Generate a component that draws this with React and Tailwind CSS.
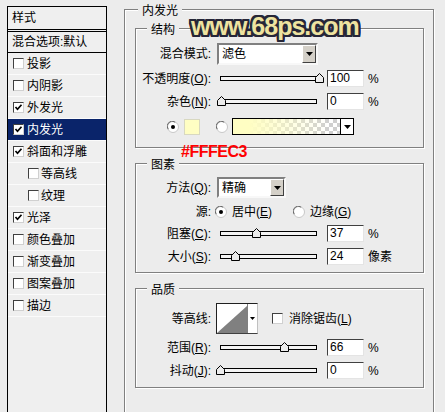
import React from 'react';

const FONT = "font-['Liberation_Sans','Noto_Sans_CJK_SC',sans-serif]";

function Check({ checked, className = '' }) {
  return (
    <div className={`w-[11px] h-[11px] flex-none bg-white border border-t-[#404040] border-l-[#404040] border-b-[#d0d0d0] border-r-[#d0d0d0] flex items-center justify-center ${className}`}>
      {checked && (
        <svg width="9" height="9" viewBox="0 0 9 9">
          <path d="M1.5 4 L3.5 6.3 L7.5 1.8" fill="none" stroke="#000" strokeWidth="1.7" />
        </svg>
      )}
    </div>
  );
}

function Radio({ on, className = '' }) {
  return (
    <svg width="12" height="12" viewBox="0 0 12 12" className={`flex-none ${className}`}>
      <circle cx="6" cy="6" r="5.5" fill="#fff" stroke="#c8c8c8" />
      <path d="M1.2 8.2 A5 5 0 0 1 8.2 1.2" fill="none" stroke="#606060" />
      {on && <circle cx="6" cy="6" r="2" fill="#000" />}
    </svg>
  );
}

function Slider({ pos }) {
  return (
    <div className="relative flex-none w-[104px] h-[17px] ml-[4px] flex items-center">
      <div className="ml-[5px] w-[97px] h-[5px] border border-black bg-[#f4f4f4]" />
      <svg
        className="absolute top-[3px]"
        style={{ left: pos - 219 }}
        width="9"
        height="10"
        viewBox="0 0 9 10"
      >
        <path d="M0.5 9.5V4.5L4.5 0.5L8.5 4.5V9.5Z" fill="#ececec" stroke="#000" />
      </svg>
    </div>
  );
}

function NumInput({ v }) {
  return (
    <div className="flex-none ml-[8px] w-[37px] h-[17px] bg-white border border-t-[#404040] border-l-[#404040] border-b-[#e4e4e4] border-r-[#e4e4e4] pl-[2px] leading-[15px]">
      {v}
    </div>
  );
}

function Arrow() {
  return (
    <svg width="7" height="4" viewBox="0 0 7 4">
      <path d="M0 0H7L3.5 4Z" fill="#000" />
    </svg>
  );
}

function Select({ text, className }) {
  return (
    <div className={`flex-none flex items-stretch bg-white border-2 border-t-[#808080] border-l-[#808080] border-b-[#f8f8f8] border-r-[#f8f8f8] ${className}`}>
      <span className="flex-1 pl-[3px] flex items-center">{text}</span>
      <div className="w-[14px] bg-[#d4d0c8] border border-t-white border-l-white border-b-[#404040] border-r-[#404040] flex items-center justify-center">
        <Arrow />
      </div>
    </div>
  );
}

function Group({ label, labelClass, className, children }) {
  return (
    <div className={`relative border border-[#808080] shadow-[inset_1px_1px_0_#fff,1px_1px_0_#fff] ${className}`}>
      <span className={`absolute bg-[#ececec] px-[4px] leading-[14px] ${labelClass}`}>{label}</span>
      {children}
    </div>
  );
}

function Label({ children }) {
  return <div className="w-[75px] flex-none text-right leading-[14px]">{children}</div>;
}

const items = [
  { t: '投影' },
  { t: '内阴影' },
  { t: '外发光', c: true },
  { t: '内发光', c: true, sel: true },
  { t: '斜面和浮雕', c: true },
  { t: '等高线', ind: true },
  { t: '纹理', ind: true },
  { t: '光泽', c: true },
  { t: '颜色叠加' },
  { t: '渐变叠加' },
  { t: '图案叠加' },
  { t: '描边' },
];

export default function App() {
  return (
    <div className={`relative w-[445px] h-[412px] overflow-hidden bg-[#ececec] flex items-start text-[12px] text-black ${FONT}`}>
      {/* Left style list */}
      <div className="flex-none ml-[7px] mt-[6px] w-[100px] h-[420px] border border-black bg-[#efefef] flex flex-col">
        <div className="h-[23px] border-b border-black pl-[4px] flex items-center leading-[14px]">样式</div>
        <div className="mt-[1px] border-t border-black h-[22px] border-b border-b-black pl-[4px] flex items-center leading-[14px]">
          混合选项:默认
        </div>
        {items.map((it) => (
          <div
            key={it.t}
            className={`h-[22px] border-b border-[#fbfbfb] flex items-center leading-[14px] ${it.ind ? 'pl-[20px]' : 'pl-[5px]'} ${it.sel ? 'bg-[#0a246a] text-white' : ''}`}
          >
            <Check checked={it.c} />
            <span className={it.ind ? 'ml-[2px]' : 'ml-[3px]'}>{it.t}</span>
          </div>
        ))}
      </div>

      {/* Right: 内发光 */}
      <Group
        label="内发光"
        labelClass="-top-[6px] left-[13px]"
        className="flex-none ml-[17px] mt-[9px] w-[310px] h-[420px] pl-[10px] pt-[18px]"
      >
        <Group label="结构" labelClass="-top-[6px] left-[11px]" className="w-[289px] h-[120px]">
          <div className="flex items-center mt-[14px] h-[22px]">
            <Label>混合模式:</Label>
            <Select text="滤色" className="ml-[6px] w-[101px] h-[22px]" />
          </div>
          <div className="flex items-center mt-[5px] h-[17px]">
            <Label>
              不透明度(<u>O</u>):
            </Label>
            <Slider pos={319} />
            <NumInput v="100" />
            <span className="ml-[4px]">%</span>
          </div>
          <div className="flex items-center mt-[6px] h-[17px]">
            <Label>
              杂色(<u>N</u>):
            </Label>
            <Slider pos={221} />
            <NumInput v="0" />
            <span className="ml-[4px]">%</span>
          </div>
          <div className="flex items-center mt-[8px] h-[17px] pl-[31px]">
            <Radio on />
            <div className="ml-[5px] w-[16px] h-[16px] bg-[#fffec3] border border-[#d8d8c0]" />
            <Radio className="ml-[16px]" />
            <div className="ml-[4px] w-[122px] h-[17px] border border-black flex">
              <div className="flex-1 [background:linear-gradient(to_right,#fffec3_15%,#fffec300_90%),repeating-conic-gradient(#cfcfcf_0_25%,#ffffff_0_50%)_0_0/8px_8px]" />
              <div className="w-[13px] bg-white border-l border-black flex items-center justify-center">
                <Arrow />
              </div>
            </div>
          </div>
        </Group>

        <Group label="图素" labelClass="-top-[6px] left-[11px]" className="mt-[15px] w-[289px] h-[110px]">
          <div className="flex items-center mt-[13px] h-[21px]">
            <Label>
              方法(<u>Q</u>):
            </Label>
            <Select text="精确" className="ml-[6px] w-[69px] h-[21px]" />
          </div>
          <div className="flex items-center mt-[5px] h-[17px]">
            <Label>源:</Label>
            <div className="flex items-center w-[78px] ml-[4px]">
              <Radio on />
              <span className="ml-[5px] leading-[14px]">
                居中(<u>E</u>)
              </span>
            </div>
            <Radio />
            <span className="ml-[5px] leading-[14px]">
              边缘(<u>G</u>)
            </span>
          </div>
          <div className="flex items-center mt-[5px] h-[17px]">
            <Label>
              阻塞(<u>C</u>):
            </Label>
            <Slider pos={256} />
            <NumInput v="37" />
            <span className="ml-[4px]">%</span>
          </div>
          <div className="flex items-center mt-[6px] h-[17px]">
            <Label>
              大小(<u>S</u>):
            </Label>
            <Slider pos={235} />
            <NumInput v="24" />
            <span className="ml-[4px] leading-[14px]">像素</span>
          </div>
        </Group>

        <Group label="品质" labelClass="-top-[6px] left-[11px]" className="mt-[15px] w-[289px] h-[100px]">
          <div className="flex items-center mt-[14px] h-[31px]">
            <Label>等高线:</Label>
            <div className="ml-[5px] w-[42px] h-[31px] flex-none flex bg-white border border-t-[#202020] border-l-[#202020] border-b-[#404040] border-r-[#c0c0c0]">
              <svg width="30" height="29" viewBox="0 0 30 29" className="flex-none">
                <path d="M0 29 L30 2 V29 Z" fill="#808080" />
              </svg>
              <div className="flex-1 border-l border-[#808080] flex items-center justify-center">
                <svg width="5" height="3" viewBox="0 0 5 3">
                  <path d="M0 0H5L2.5 3Z" fill="#000" />
                </svg>
              </div>
            </div>
            <Check className="ml-[14px]" />
            <span className="ml-[6px] leading-[14px]">
              消除锯齿(<u>L</u>)
            </span>
          </div>
          <div className="flex items-center mt-[5px] h-[17px]">
            <Label>
              范围(<u>R</u>):
            </Label>
            <Slider pos={284} />
            <NumInput v="66" />
            <span className="ml-[4px]">%</span>
          </div>
          <div className="flex items-center mt-[6px] h-[17px]">
            <Label>
              抖动(<u>J</u>):
            </Label>
            <Slider pos={220} />
            <NumInput v="0" />
            <span className="ml-[4px]">%</span>
          </div>
        </Group>
      </Group>

      {/* Watermark */}
      <div className="absolute left-[191px] top-[14px] font-['Liberation_Sans'] font-bold text-[25px] leading-[25px] tracking-[-1px] text-[#eee3a0] [text-shadow:2px_0_#262638,-2px_0_#262638,0_2px_#262638,0_-2px_#262638,2px_2px_#262638,-2px_-2px_#262638,2px_-2px_#262638,-2px_2px_#262638,1px_2px_#262638,2px_1px_#262638,-1px_2px_#262638,-2px_1px_#262638,1px_-2px_#262638,2px_-1px_#262638,-1px_-2px_#262638,-2px_-1px_#262638]">
        www.68ps.com
      </div>

      {/* Color annotation */}
      <div className="absolute left-[181px] top-[144px] font-['Liberation_Sans'] font-bold text-[16px] leading-[16px] tracking-[-0.5px] text-[#ff0000]">
        #FFFEC3
      </div>
    </div>
  );
}
